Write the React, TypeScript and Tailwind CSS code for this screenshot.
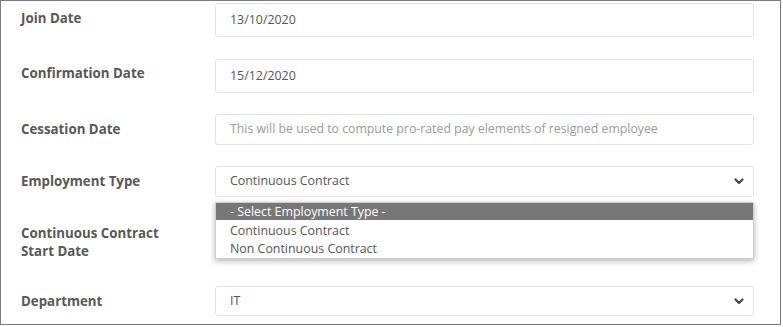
import React from 'react';

const font = { fontFamily: '"Open Sans", "Noto Sans", sans-serif' };

function Chevron() {
  return (
    <svg width="10" height="7" viewBox="0 0 10 7" className="text-[#444]">
      <polyline points="1.5,1.5 5,5 8.5,1.5" fill="none" stroke="currentColor" strokeWidth="2.2" strokeLinecap="round" strokeLinejoin="round" />
    </svg>
  );
}

function Field({ value, placeholder, select, h }: { value?: string; placeholder?: string; select?: boolean; h: string }) {
  return (
    <div className={`flex items-center justify-between rounded-[3px] border border-[#e3e3e3] bg-white pl-[14px] pr-[9px] ${h}`}>
      {value ? (
        <span className="text-[12.4px] text-[#555]">{value}</span>
      ) : (
        <span className="text-[12.3px] text-[#9a9a9a]">{placeholder}</span>
      )}
      {select && <Chevron />}
    </div>
  );
}

export default function App() {
  return (
    <div style={font} className="w-[781px] h-[325px] border border-[#7b7b7b] bg-white overflow-hidden">
      <div className="pl-[20px] pr-[26px] pt-[2px]">
        {/* Join Date */}
        <div className="flex">
          <div className="w-[194px] pt-[6px] text-[13.3px] font-bold text-[#585858]">Join Date</div>
          <div className="flex-1"><Field value="13/10/2020" h="h-[34px]" /></div>
        </div>

        {/* Confirmation Date */}
        <div className="flex mt-[22px]">
          <div className="w-[194px] pt-[5px] text-[13.3px] font-bold text-[#585858]">Confirmation Date</div>
          <div className="flex-1"><Field value="15/12/2020" h="h-[34px]" /></div>
        </div>

        {/* Cessation Date */}
        <div className="flex mt-[21px]">
          <div className="w-[194px] pt-[6px] text-[13.3px] font-bold text-[#585858]">Cessation Date</div>
          <div className="flex-1">
            <Field placeholder="This will be used to compute pro-rated pay elements of resigned employee" h="h-[31px]" />
          </div>
        </div>

        {/* Employment Type */}
        <div className="flex mt-[21px] relative z-10">
          <div className="w-[194px] pt-[6px] text-[13.3px] font-bold text-[#585858]">Employment Type</div>
          <div className="flex-1 relative">
            <Field value="Continuous Contract" select h="h-[31px]" />
            <div className="absolute left-0 right-0 top-[36px] h-[57px] bg-white border border-[#cfcfcf] shadow-[0_2px_6px_rgba(0,0,0,0.3)] text-[12.4px] leading-[18px]">
              <div className="bg-[#777] text-white pl-[14px] h-[17px] leading-[17px]">- Select Employment Type -</div>
              <div className="text-[#555] pl-[14px] mt-[2px]">Continuous Contract</div>
              <div className="text-[#555] pl-[14px]">Non Continuous Contract</div>
            </div>
          </div>
        </div>

        {/* Continuous Contract Start Date */}
        <div className="flex mt-[25px]">
          <div className="w-[194px] pt-[2px] text-[13.3px] font-bold leading-[18px] text-[#585858]">
            Continuous Contract<br />Start Date
          </div>
          <div className="flex-1"><Field h="h-[31px]" /></div>
        </div>

        {/* Department */}
        <div className="flex mt-[26px]">
          <div className="w-[194px] pt-[6px] text-[13.3px] font-bold text-[#585858]">Department</div>
          <div className="flex-1"><Field value="IT" select h="h-[30px]" /></div>
        </div>
      </div>
    </div>
  );
}
